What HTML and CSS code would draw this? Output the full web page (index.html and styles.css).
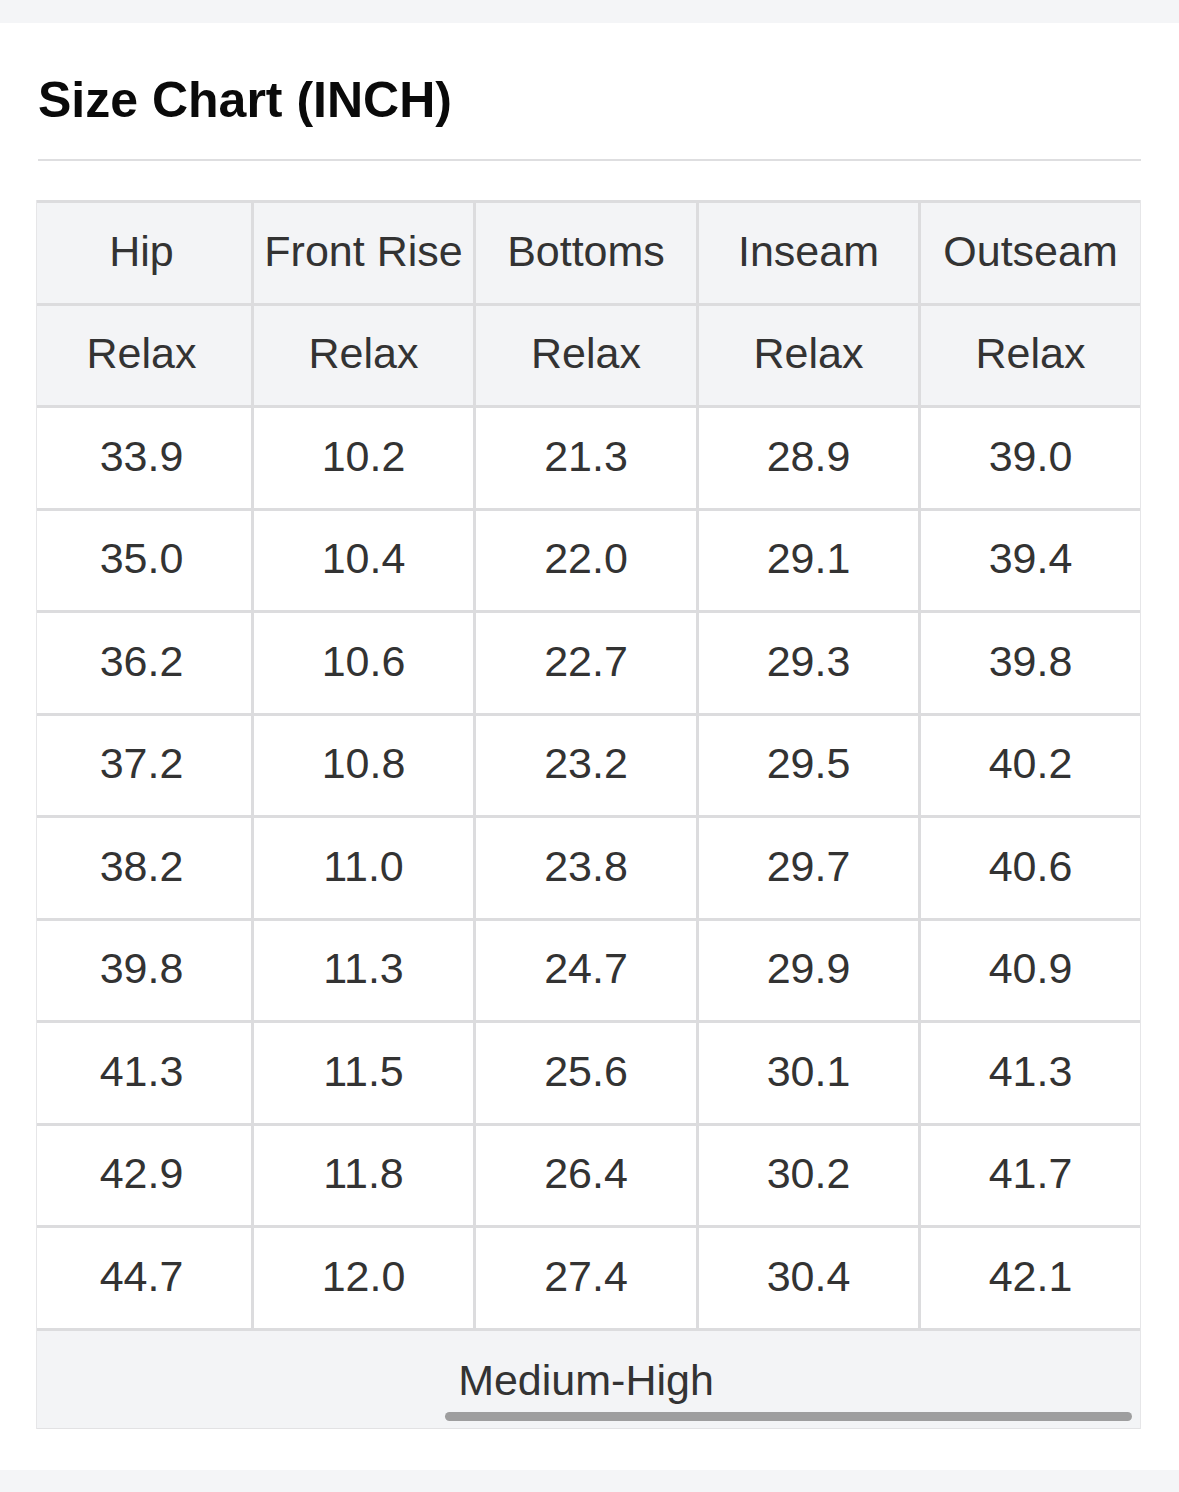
FILE: index.html
```html
<!DOCTYPE html>
<html lang="en">
<head>
<meta charset="utf-8">
<title>Size Chart (INCH)</title>
<link rel="stylesheet" href="styles.css">
</head>
<body>
<div class="page">
  <section class="card">
    <h1 class="title">Size Chart (INCH)</h1>
    <div class="divider"></div>
    <div class="chart">
      <table class="size-table">
        <colgroup>
          <col class="c1"><col class="c2"><col class="c3"><col class="c4"><col class="c5">
        </colgroup>
        <thead>
          <tr class="head"><th>Hip</th><th>Front Rise</th><th>Bottoms</th><th>Inseam</th><th>Outseam</th></tr>
          <tr class="head"><th>Relax</th><th>Relax</th><th>Relax</th><th>Relax</th><th>Relax</th></tr>
        </thead>
        <tbody>
          <tr><td>33.9</td><td>10.2</td><td>21.3</td><td>28.9</td><td>39.0</td></tr>
          <tr><td>35.0</td><td>10.4</td><td>22.0</td><td>29.1</td><td>39.4</td></tr>
          <tr><td>36.2</td><td>10.6</td><td>22.7</td><td>29.3</td><td>39.8</td></tr>
          <tr><td>37.2</td><td>10.8</td><td>23.2</td><td>29.5</td><td>40.2</td></tr>
          <tr><td>38.2</td><td>11.0</td><td>23.8</td><td>29.7</td><td>40.6</td></tr>
          <tr><td>39.8</td><td>11.3</td><td>24.7</td><td>29.9</td><td>40.9</td></tr>
          <tr><td>41.3</td><td>11.5</td><td>25.6</td><td>30.1</td><td>41.3</td></tr>
          <tr><td>42.9</td><td>11.8</td><td>26.4</td><td>30.2</td><td>41.7</td></tr>
          <tr><td>44.7</td><td>12.0</td><td>27.4</td><td>30.4</td><td>42.1</td></tr>
        </tbody>
      </table>
      <div class="chart-foot">
        <div class="foot-label">Medium-High</div>
        <div class="scroll-thumb"></div>
      </div>
    </div>
  </section>
</div>
</body>
</html>
```

FILE: styles.css
```css
html, body {
  margin: 0;
  padding: 0;
}
body {
  background: #f4f5f7;
  font-family: "Liberation Sans", Arial, Helvetica, sans-serif;
  color: #333;
}
.page {
  padding-top: 23px;
  padding-bottom: 22px;
}
.card {
  background: #fff;
  padding: 0 38px 41px 36px;
  overflow: hidden;
}
.title {
  margin: 47px 0 0 2px;
  font-size: 50px;
  line-height: 60px;
  font-weight: 700;
  color: #0a0a0a;
}
.divider {
  margin: 29px 0 0 2px;
  height: 2px;
  background: #dedee0;
}
.chart {
  margin-top: 39px;
  width: 1103px;
  border-left: 1px solid #e6e6e8;
  border-right: 1px solid #e6e6e8;
}
.size-table {
  width: 1103px;
  table-layout: fixed;
  border-collapse: separate;
  border-spacing: 0;
  border-top: 3px solid #dcdcde;
}
.c1 { width: 217px; }
.c2 { width: 222px; }
.c3 { width: 223px; }
.c4 { width: 222px; }
.c5 { width: 219px; }
.size-table th,
.size-table td {
  padding: 0 0 4px 0;
  box-sizing: border-box;
  height: 102.5px;
  text-align: center;
  vertical-align: middle;
  font-size: 43px;
  font-weight: 400;
  line-height: 48px;
  color: #333;
  border-right: 3px solid #dcdcde;
  border-bottom: 3px solid #dcdcde;
  white-space: nowrap;
}
.size-table th:first-child,
.size-table td:first-child {
  padding-right: 5px;
}
.size-table th:last-child,
.size-table td:last-child {
  border-right: 0;
}
.size-table th {
  background: #f3f4f6;
}
.size-table td {
  background: #fff;
}
.chart-foot {
  background: #f3f4f6;
  padding: 25px 0 7px 0;
  border-bottom: 1px solid #e2e2e4;
}
.foot-label {
  text-align: center;
  font-size: 43px;
  line-height: 48px;
  color: #333;
  padding-right: 5px;
}
.scroll-thumb {
  margin: 8px 0 0 408px;
  width: 687px;
  height: 9px;
  border-radius: 5px;
  background: #9e9e9f;
}
```
